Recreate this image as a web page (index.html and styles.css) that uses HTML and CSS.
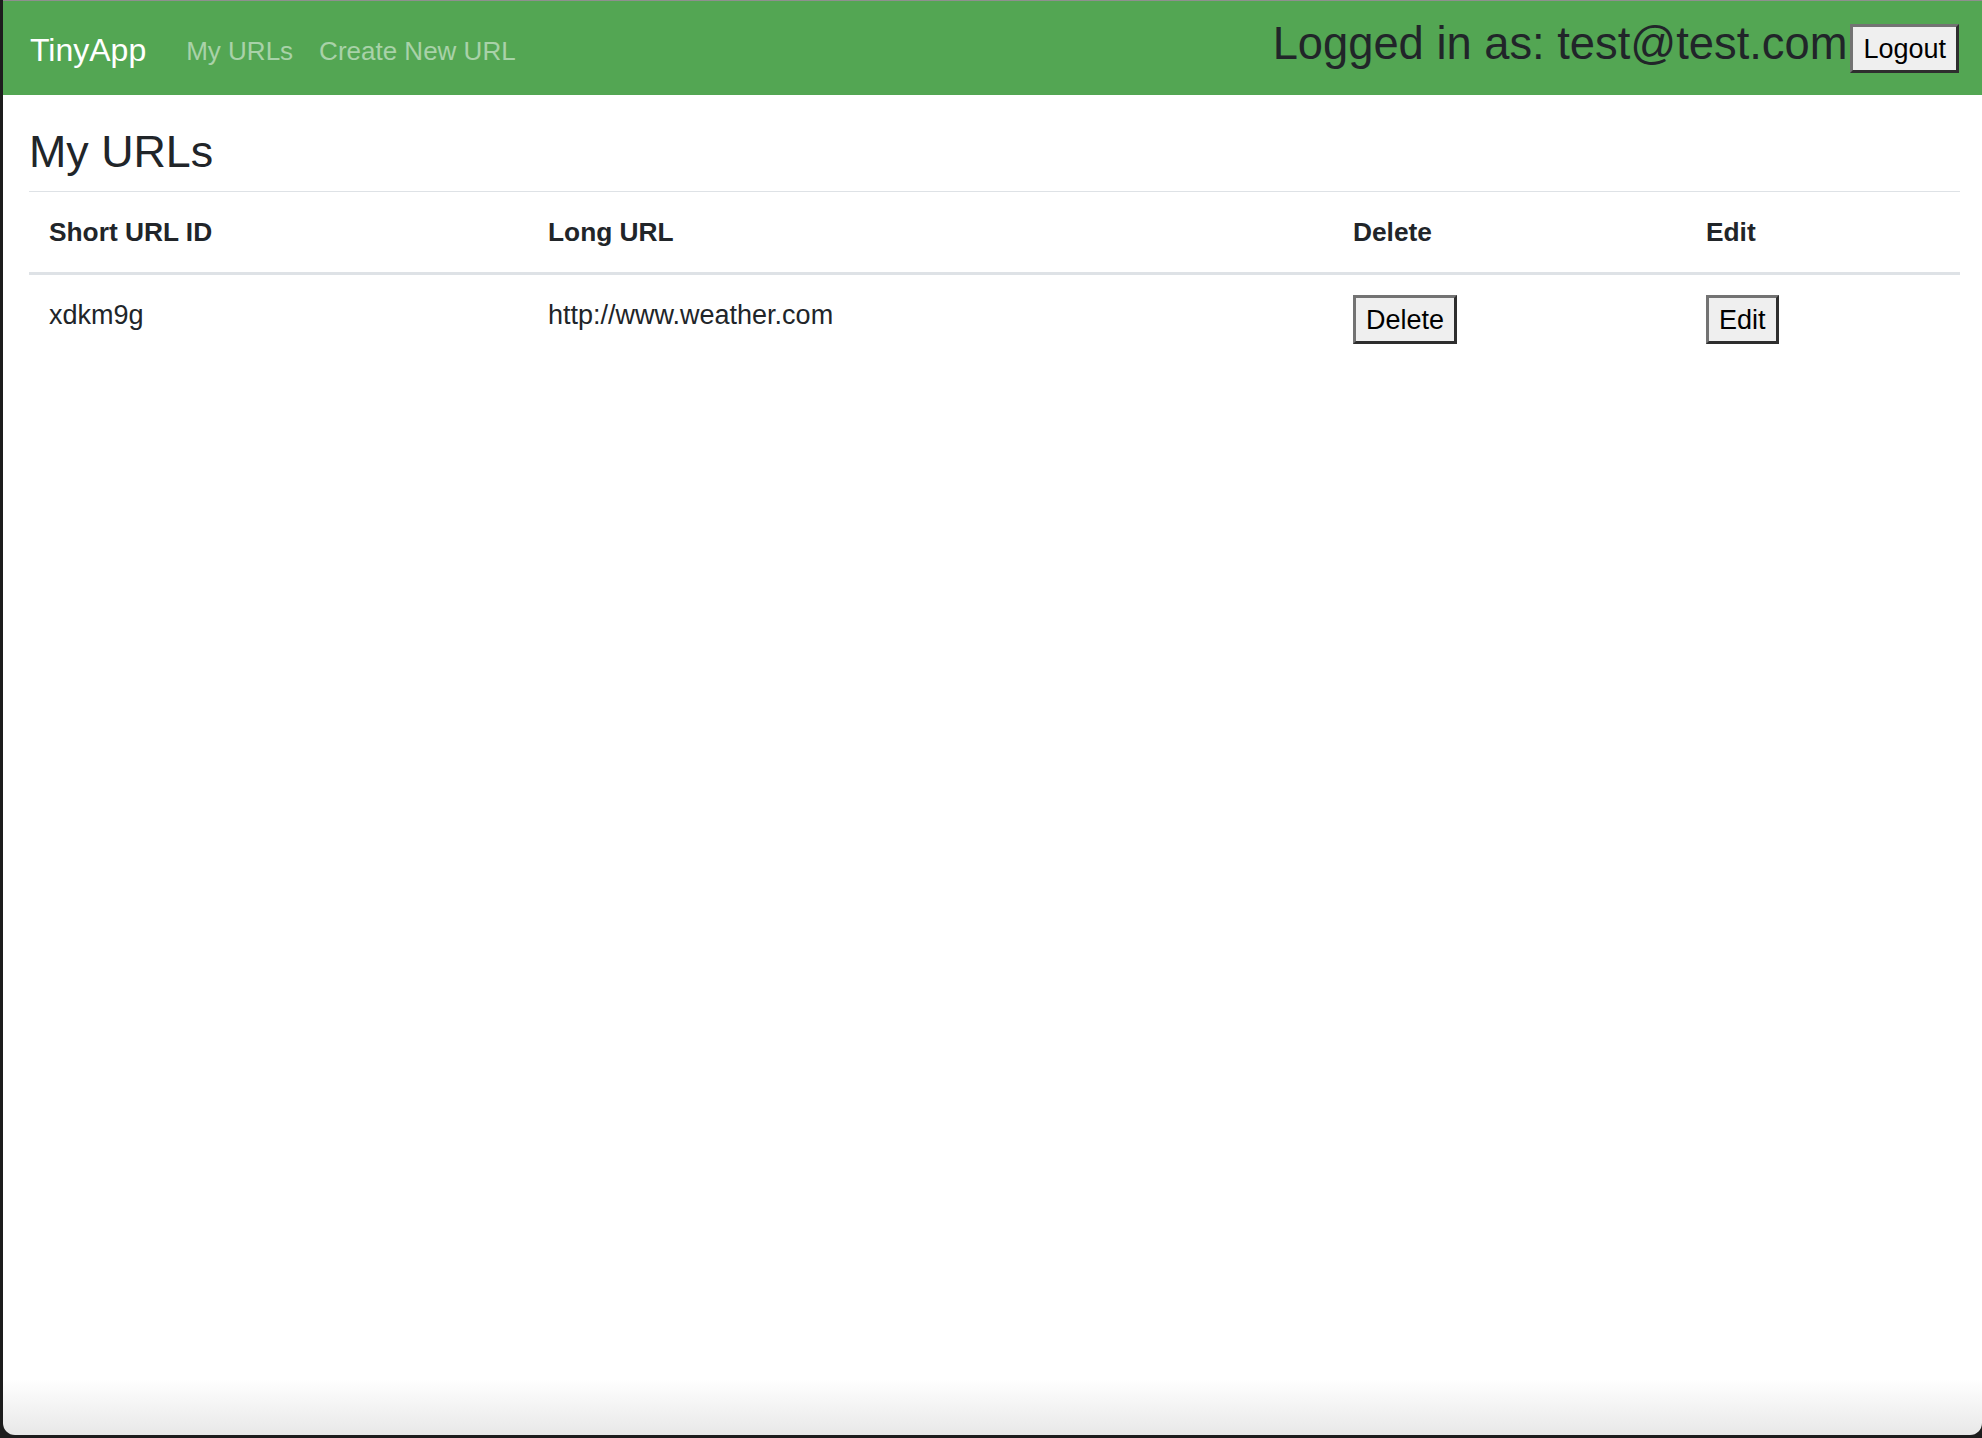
FILE: index.html
```html
<!DOCTYPE html>
<html lang="en">
<head>
<meta charset="utf-8">
<title>TinyApp</title>
<link rel="stylesheet" href="styles.css">
</head>
<body>
<div class="window">
  <nav class="navbar">
    <a class="brand" href="#">TinyApp</a>
    <a class="nav-link" href="#">My URLs</a>
    <a class="nav-link" href="#">Create New URL</a>
    <div class="user">
      <h3 class="user-title">Logged in as: test@test.com</h3>
      <form class="logout-form"><button type="button" class="btn">Logout</button></form>
    </div>
  </nav>
  <main class="container">
    <h3 class="page-title">My URLs</h3>
    <table class="table">
      <colgroup>
        <col class="c1"><col class="c2"><col class="c3"><col class="c4">
      </colgroup>
      <thead>
        <tr><th>Short URL ID</th><th>Long URL</th><th>Delete</th><th>Edit</th></tr>
      </thead>
      <tbody>
        <tr>
          <td>xdkm9g</td>
          <td>http://www.weather.com</td>
          <td><form><button type="button" class="btn">Delete</button></form></td>
          <td><form><button type="button" class="btn">Edit</button></form></td>
        </tr>
      </tbody>
    </table>
  </main>
</div>
</body>
</html>
```
FILE: styles.css
```css
html, body {
  margin: 0;
  height: 1438px;
  overflow: hidden;
  background: #1d1d1d;
}
body {
  font-family: "Liberation Sans", Arial, sans-serif;
  color: #212529;
}
.window {
  margin-left: 3px;
  height: 1435px;
  box-sizing: border-box;
  border-top: 1px solid #8f8f8f;
  border-radius: 0 0 12px 12px;
  overflow: hidden;
  background: linear-gradient(to bottom, #ffffff calc(100% - 56px), #e8e8e8);
}
.navbar {
  display: flex;
  align-items: center;
  height: 94px;
  box-sizing: border-box;
  padding: 0 23px 0 27px;
  background: #53a653;
  white-space: nowrap;
}
.brand {
  font-size: 32px;
  line-height: 50px;
  padding: 4px 0 0;
  margin-right: 27px;
  color: #ffffff;
  text-decoration: none;
}
.nav-link {
  font-size: 26px;
  line-height: 40px;
  padding: 5px 13px 0;
  color: rgba(255, 255, 255, 0.5);
  text-decoration: none;
}
.user {
  margin-left: auto;
  display: flex;
  align-items: center;
  gap: 3px;
}
.user-title {
  margin: 0 0 9px;
  font-size: 45.3px;
  line-height: 54px;
  font-weight: 400;
  color: #212529;
}
.logout-form {
  margin: 0 0 -1px;
}
.btn {
  font-family: "Liberation Sans", Arial, sans-serif;
  font-size: 27px;
  line-height: 40px;
  padding: 1.5px 10px;
  margin: 0;
  color: #000000;
  background: #efefef;
  border-style: solid;
  border-width: 3px;
  border-color: #737373 #2e2e2e #2e2e2e #737373;
  border-radius: 0;
  display: inline-block;
}
.container {
  padding: 0 22px 0 26px;
}
.page-title {
  margin: 30px 0 13px;
  font-size: 44.8px;
  line-height: 53px;
  font-weight: 400;
  color: #212529;
}
.table {
  width: 100%;
  table-layout: fixed;
  border-collapse: collapse;
  font-size: 27px;
  line-height: 40px;
  color: #212529;
}
.c1 { width: 499px; }
.c2 { width: 805px; }
.c3 { width: 353px; }
.c4 { width: 274px; }
.table th {
  text-align: left;
  font-size: 26.3px;
  font-weight: 700;
  padding: 20px;
  vertical-align: bottom;
  border-top: 1px solid #dee2e6;
  border-bottom: 3px solid #dee2e6;
}
.table td {
  padding: 20px;
  vertical-align: top;
  border-top: 1px solid #dee2e6;
}
.table td form {
  margin: 0;
}
```
